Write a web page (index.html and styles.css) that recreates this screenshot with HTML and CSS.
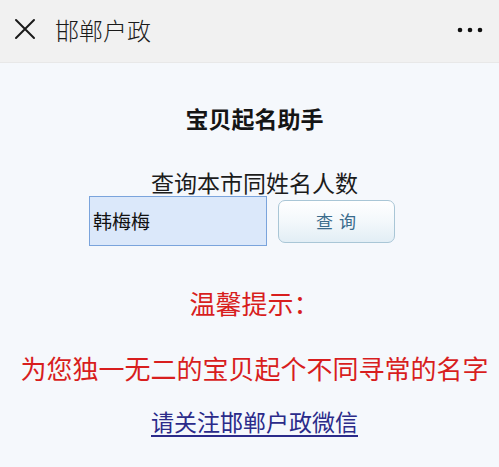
FILE: index.html
```html
<!DOCTYPE html>
<html lang="zh-CN">
<head>
<meta charset="utf-8">
<title>邯郸户政</title>
<link rel="stylesheet" href="styles.css">
</head>
<body>
<header class="topbar">
  <svg class="close" width="22" height="22" viewBox="0 0 22 22" aria-hidden="true">
    <path d="M2 2 L20 20 M20 2 L2 20" stroke="#1a1a1a" stroke-width="2" stroke-linecap="round" fill="none"/>
  </svg>
  <span class="topbar-title">邯郸户政</span>
  <svg class="more" width="26" height="6" viewBox="0 0 26 6" aria-hidden="true">
    <circle cx="3" cy="3" r="2.3" fill="#111"/>
    <circle cx="13" cy="3" r="2.3" fill="#111"/>
    <circle cx="23" cy="3" r="2.3" fill="#111"/>
  </svg>
</header>
<main class="page">
  <h1 class="title">宝贝起名助手</h1>
  <p class="subtitle">查询本市同姓名人数</p>
  <form class="query" onsubmit="return false">
    <input class="name-input" type="text" value="韩梅梅">
    <button class="query-btn" type="button">查&nbsp;询</button>
  </form>
  <p class="tip-head">温馨提示：</p>
  <p class="tip-line">为您独一无二的宝贝起个不同寻常的名字</p>
  <a class="follow" href="#">请关注邯郸户政微信</a>
</main>
</body>
</html>
```
FILE: styles.css
```css
html, body {
  margin: 0;
  padding: 0;
}
body {
  width: 499px;
  height: 467px;
  overflow: hidden;
  background: #f5f8fc;
  font-family: "Noto Sans CJK SC", "Noto Sans", sans-serif;
}
.topbar {
  height: 62px;
  background: #f1f1f1;
  border-bottom: 1px solid #e8e8e8;
  display: flex;
  align-items: center;
  padding: 0 16px 0 14px;
  box-sizing: content-box;
}
.close {
  margin-top: -4px;
}
.topbar-title {
  margin-left: 19px;
  margin-top: -4px;
  font-size: 24px;
  font-weight: 300;
  color: #1a1a1a;
}
.more {
  margin-left: auto;
  margin-top: -2px;
}
.page {
  display: flex;
  flex-direction: column;
  align-items: center;
  padding-left: 10px;
}
.title {
  margin: 40px 0 0;
  font-size: 23px;
  line-height: 30px;
  font-weight: 700;
  color: #151515;
}
.subtitle {
  margin: 35px 0 0;
  font-size: 23px;
  line-height: 28px;
  color: #1c1c1c;
}
.query {
  align-self: stretch;
  display: flex;
  align-items: center;
  gap: 11px;
  padding-left: 79px;
  margin: 0;
}
.name-input {
  width: 178px;
  height: 50px;
  box-sizing: border-box;
  border: 1px solid #7aa4dc;
  background: #dbe8fa;
  font-family: inherit;
  font-size: 19px;
  color: #111;
  padding: 0 0 2px 3px;
  margin: 0;
  outline: none;
}
.query-btn {
  width: 117px;
  height: 43px;
  box-sizing: border-box;
  border: 1.5px solid #a9c6d6;
  border-radius: 7px;
  background: linear-gradient(#ffffff 0%, #f3f8fb 50%, #e2eef5 100%);
  font-family: inherit;
  font-size: 17px;
  color: #3a6b8c;
  letter-spacing: 1px;
  padding: 0 0 2px;
  margin: 0;
}
.tip-head {
  margin: 39px 0 0;
  font-size: 26px;
  line-height: 36px;
  color: #d81e1e;
}
.tip-line {
  margin: 29px 0 0;
  font-size: 26px;
  line-height: 36px;
  color: #d81e1e;
  white-space: nowrap;
}
.follow {
  margin-top: 19px;
  font-size: 23px;
  line-height: 32px;
  color: #2b2b8a;
  text-decoration: underline;
  text-underline-offset: 4px;
}
```
